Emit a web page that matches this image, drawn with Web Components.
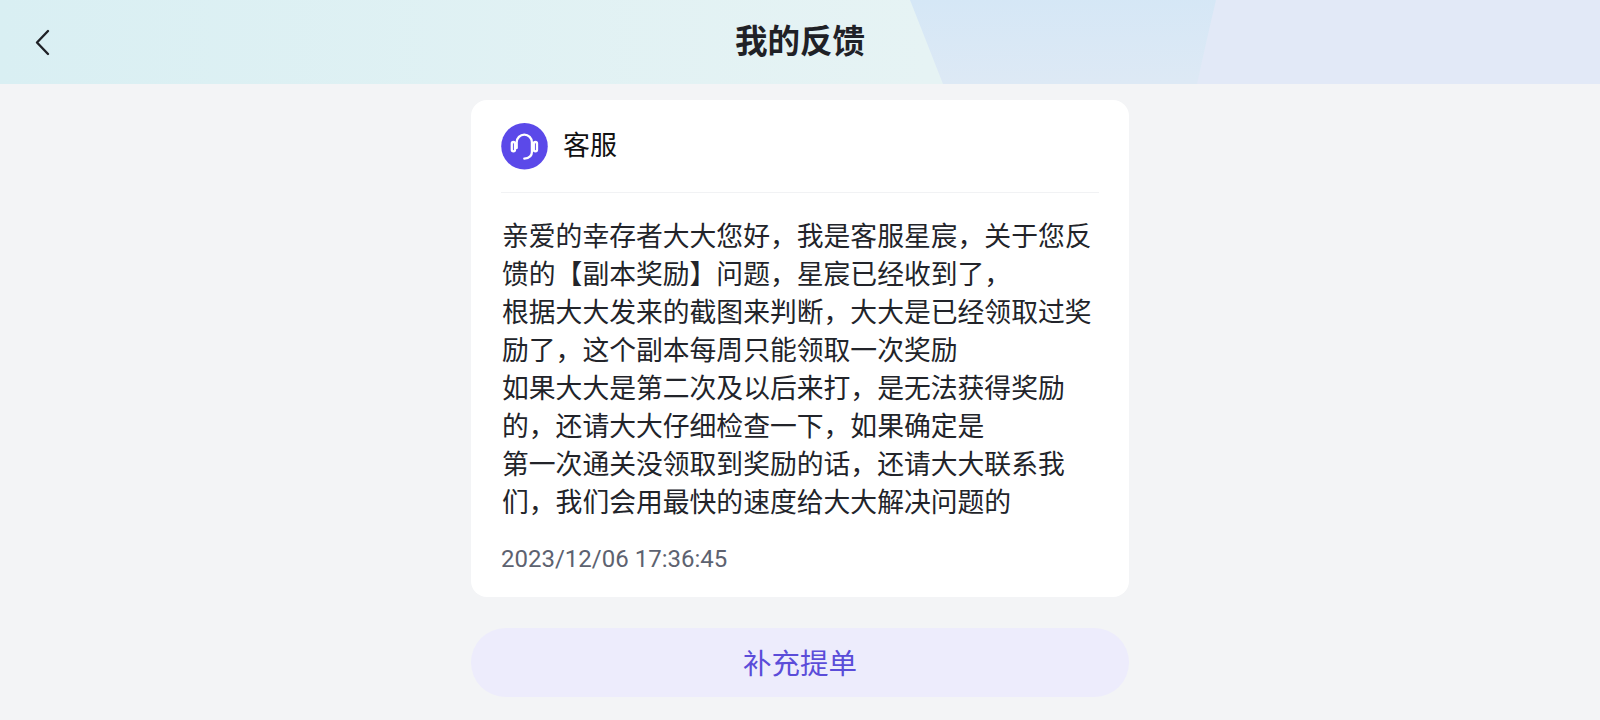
<!DOCTYPE html>
<html lang="zh">
<head>
<meta charset="utf-8">
<title>我的反馈</title>
<style>
    html, body { margin: 0; height: 100%; background: #f3f4f6; }
    body { font-family: Roboto, "Noto Sans CJK SC", sans-serif; overflow: hidden; }
    main { display: flex; flex-direction: column; align-items: center; gap: 31px; padding-top: 16px; }
</style>
</head>
<body>
<top-bar>我的反馈</top-bar>
<main>
    <reply-card name="客服" time="2023/12/06 17:36:45">亲爱的幸存者大大您好，我是客服星宸，关于您反馈的【副本奖励】问题，星宸已经收到了，<br>根据大大发来的截图来判断，大大是已经领取过奖励了，这个副本每周只能领取一次奖励<br>如果大大是第二次及以后来打，是无法获得奖励的，还请大大仔细检查一下，如果确定是<br>第一次通关没领取到奖励的话，还请大大联系我们，我们会用最快的速度给大大解决问题的</reply-card>
    <pill-button>补充提单</pill-button>
</main>
<script>
class TopBar extends HTMLElement {
    constructor() {
        super();
        this.attachShadow({ mode: 'open' });
        this.shadowRoot.innerHTML = `
        <style>
            :host {
                display: flex;
                align-items: center;
                justify-content: center;
                position: relative;
                height: 84px;
                overflow: hidden;
                background: linear-gradient(90deg, #d9eff3 0%, #e6f3f4 58%);
                color: #1f2126;
            }
            .bg { position: absolute; inset: 0; width: 100%; height: 100%; }
            .back { position: absolute; left: 34px; top: 28px; width: 16px; height: 29px; }
            h1 { position: relative; margin: 0; font-size: 32.5px; font-weight: 700; line-height: 84px; }
        </style>
        <svg class="bg" viewBox="0 0 1600 84" preserveAspectRatio="none">
            <defs>
                <linearGradient id="mid" x1="0" y1="0" x2="0.15" y2="1">
                    <stop offset="0" stop-color="#d5e7f6"/>
                    <stop offset="1" stop-color="#dde9f5"/>
                </linearGradient>
            </defs>
            <path d="M910 0H1600V84H943Q925 38 910 0Z" fill="url(#mid)"/>
            <path d="M1216 0H1600V84H1197Q1207 38 1216 0Z" fill="#e2e9f7"/>
        </svg>
        <svg class="back" viewBox="0 0 16 29" fill="none" stroke="currentColor" stroke-width="2.4" stroke-linecap="round" stroke-linejoin="round">
            <path d="M14 3 3 14.500 14 26"/>
        </svg>
        <h1><slot></slot></h1>
        `;
    }
}

class ReplyCard extends HTMLElement {
    constructor() {
        super();
        this.attachShadow({ mode: 'open' });
        this.shadowRoot.innerHTML = `
        <style>
            :host {
                display: block;
                box-sizing: border-box;
                width: 658px;
                height: 497px;
                padding: 23px 30px 0;
                background: #fff;
                border-radius: 16px;
                color: #22242a;
            }
            .head {
                display: flex;
                align-items: flex-start;
                gap: 15px;
                height: 69px;
                border-bottom: 1px solid #f1f2f4;
                color: #111;
                font-size: 27px;
            }
            .head svg { width: 47px; height: 47px; flex: none; }
            .head span { line-height: 47px; }
            .body {
                margin: 25px 0 0 1px;
                width: 596px;
                font-size: 26.8px;
                line-height: 38px;
                word-break: break-all;
            }
            .time { margin-top: 20px; color: #5d6270; font-size: 24px; line-height: 34px; }
        </style>
        <div class="head">
            <svg viewBox="0 0 47 47" fill="none">
                <circle cx="23.500" cy="23.250" r="23.250" fill="#5b49e9"/>
                <g stroke="#fff" stroke-width="2.300" stroke-linecap="round">
                    <path d="M15.700 25V19.300a7.600 7.600 0 0 1 15.200 0V29q0 6-7.600 6.700"/>
                    <rect x="10.800" y="19" width="3.200" height="9.400" rx="1.600"/>
                    <rect x="32.800" y="19" width="3.200" height="9.400" rx="1.600"/>
                </g>
            </svg>
            <span></span>
        </div>
        <div class="body"><slot></slot></div>
        <div class="time"></div>
        `;
    }

    connectedCallback() {
        this.shadowRoot.querySelector('.head span').textContent = this.getAttribute('name');
        this.shadowRoot.querySelector('.time').textContent = this.getAttribute('time');
    }
}

class PillButton extends HTMLElement {
    constructor() {
        super();
        this.attachShadow({ mode: 'open' });
        this.shadowRoot.innerHTML = `
        <style>
            :host {
                display: flex;
                align-items: center;
                justify-content: center;
                box-sizing: border-box;
                width: 658px;
                height: 69px;
                padding-bottom: 2px;
                border-radius: 35px;
                background: #edecfc;
                color: #5b4dd9;
                font-size: 28.5px;
            }
        </style>
        <slot></slot>
        `;
    }
}

customElements.define('top-bar', TopBar);
customElements.define('reply-card', ReplyCard);
customElements.define('pill-button', PillButton);
</script>
</body>
</html>
